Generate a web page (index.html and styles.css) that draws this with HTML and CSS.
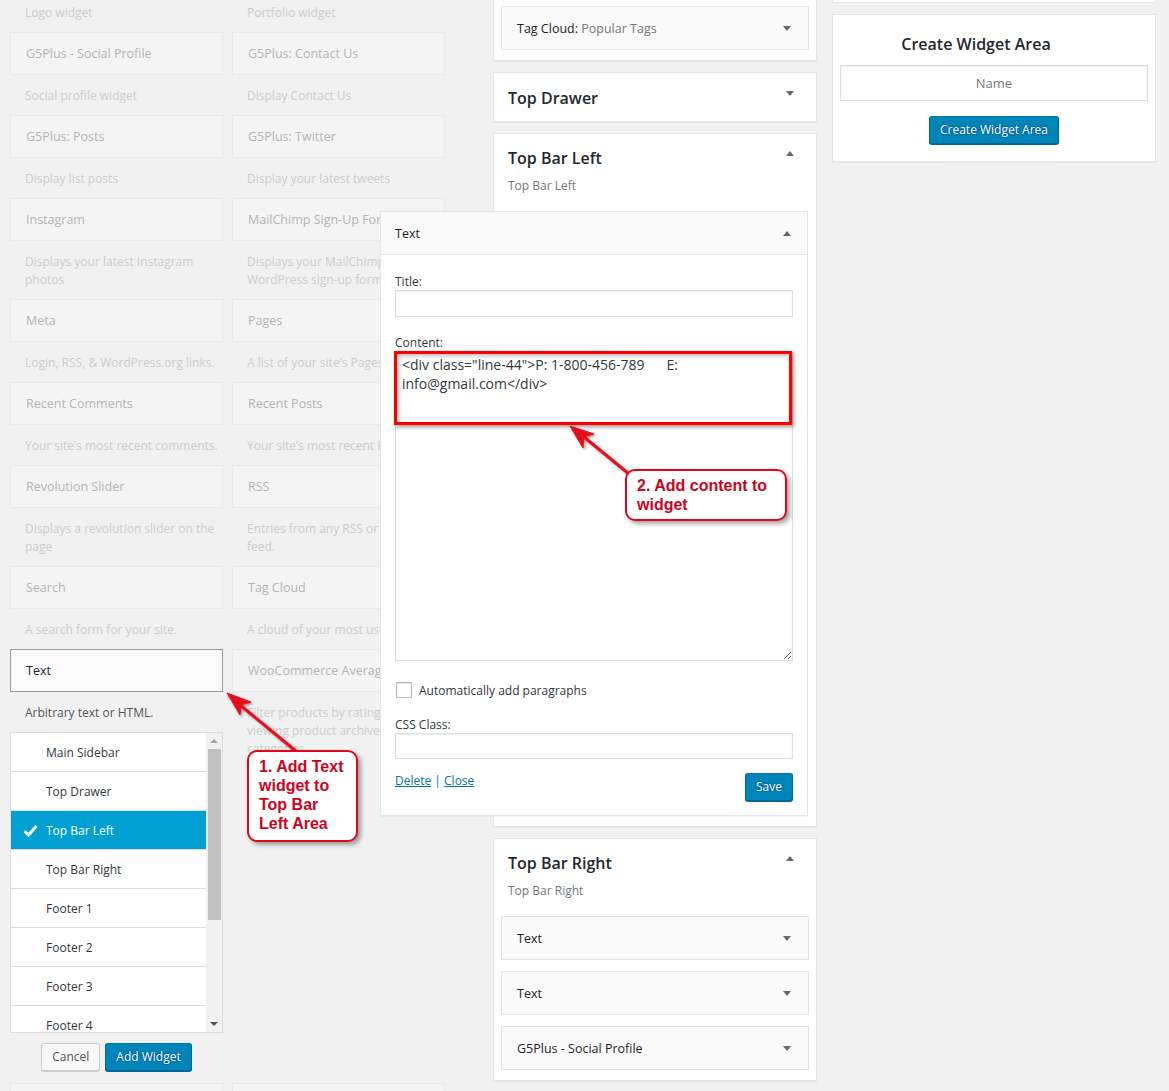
FILE: index.html
```html
<!DOCTYPE html>
<html lang="en">
<head>
	<meta charset="UTF-8">
	<title>Widgets</title>
<link rel="stylesheet" href="styles.css">
</head>
<body>
	<div class="wrap">
		<!-- available widgets, faded while the chooser is open -->
		<div class="available">
			<div class="widget"><div class="desc first">Logo widget</div></div>
			<div class="widget"><div class="desc first">Portfolio widget</div></div>

			<div class="widget"><div class="w-top">G5Plus - Social Profile</div><div class="desc">Social profile widget</div></div>
			<div class="widget"><div class="w-top">G5Plus: Contact Us</div><div class="desc">Display Contact Us</div></div>

			<div class="widget"><div class="w-top">G5Plus: Posts</div><div class="desc">Display list posts</div></div>
			<div class="widget"><div class="w-top">G5Plus: Twitter</div><div class="desc">Display your latest tweets</div></div>

			<div class="widget"><div class="w-top">Instagram</div><div class="desc">Displays your latest Instagram<br>photos</div></div>
			<div class="widget"><div class="w-top">MailChimp Sign-Up Form</div><div class="desc">Displays your MailChimp for<br>WordPress sign-up form</div></div>

			<div class="widget"><div class="w-top">Meta</div><div class="desc">Login, RSS, &amp; WordPress.org links.</div></div>
			<div class="widget"><div class="w-top">Pages</div><div class="desc">A list of your site’s Pages.</div></div>

			<div class="widget"><div class="w-top">Recent Comments</div><div class="desc">Your site’s most recent comments.</div></div>
			<div class="widget"><div class="w-top">Recent Posts</div><div class="desc">Your site’s most recent Posts.</div></div>

			<div class="widget"><div class="w-top">Revolution Slider</div><div class="desc">Displays a revolution slider on the<br>page</div></div>
			<div class="widget"><div class="w-top">RSS</div><div class="desc">Entries from any RSS or Atom<br>feed.</div></div>

			<div class="widget"><div class="w-top">Search</div><div class="desc">A search form for your site.</div></div>
			<div class="widget"><div class="w-top">Tag Cloud</div><div class="desc">A cloud of your most used tags.</div></div>

			<div class="widget in-question">
				<div class="w-top">Text</div>
				<div class="desc">Arbitrary text or HTML.</div>
				<div class="chooser">
					<ul>
						<li><span class="tick"></span>Main Sidebar</li>
						<li><span class="tick"></span>Top Drawer</li>
						<li class="selected"><span class="tick"><svg width="15" height="13" viewBox="0 0 15 13"><path d="M1.5 7 L5.5 11 L13.5 2" fill="none" stroke="#fff" stroke-width="3"/></svg></span>Top Bar Left</li>
						<li><span class="tick"></span>Top Bar Right</li>
						<li><span class="tick"></span>Footer 1</li>
						<li><span class="tick"></span>Footer 2</li>
						<li><span class="tick"></span>Footer 3</li>
						<li><span class="tick"></span>Footer 4</li>
					</ul>
					<div class="scrollbar">
						<div class="sb-btn"><span class="sb-up"></span></div>
						<div class="sb-thumb"></div>
						<div class="sb-space"></div>
						<div class="sb-btn"><span class="sb-down"></span></div>
					</div>
				</div>
				<div class="chooser-actions">
					<button class="button">Cancel</button>
					<button class="button primary">Add Widget</button>
				</div>
			</div>
			<div class="widget"><div class="w-top">WooCommerce Average Rating Filter</div><div class="desc">Filter products by rating when<br>viewing product archives and<br>categories.</div></div>

			<div class="widget"><div class="w-top"></div></div>
			<div class="widget"><div class="w-top"></div></div>
		</div>

		<!-- registered sidebars -->
		<div class="sidebars">
			<div class="sidebar partial">
				<div class="widget-box"><span class="w-title">Tag Cloud: <span class="in-title">Popular Tags</span></span><span class="arrow-down"></span></div>
			</div>

			<div class="sidebar closed">
				<h2>Top Drawer <span class="arrow-down"></span></h2>
			</div>

			<div class="sidebar">
				<h2>Top Bar Left <span class="arrow-up"></span></h2>
				<div class="sidebar-desc">Top Bar Left</div>
				<div class="widget-open">
					<div class="head"><span class="w-title">Text</span><span class="arrow-up"></span></div>
					<div class="body">
						<label>Title:</label>
						<input class="field" type="text">
						<label>Content:</label>
						<textarea class="field area">&lt;div class="line-44"&gt;P: 1-800-456-789      E: info@gmail.com&lt;/div&gt;</textarea>
						<div class="check-row"><input class="check" type="checkbox"><span>Automatically add paragraphs</span></div>
						<label>CSS Class:</label>
						<input class="field small" type="text">
						<div class="actions">
							<div class="links"><a href="#">Delete</a> | <a href="#">Close</a></div>
							<button class="button primary">Save</button>
						</div>
					</div>
				</div>
			</div>

			<div class="sidebar">
				<h2>Top Bar Right <span class="arrow-up"></span></h2>
				<div class="sidebar-desc">Top Bar Right</div>
				<div class="widget-box"><span class="w-title">Text</span><span class="arrow-down"></span></div>
				<div class="widget-box"><span class="w-title">Text</span><span class="arrow-down"></span></div>
				<div class="widget-box"><span class="w-title">G5Plus - Social Profile</span><span class="arrow-down"></span></div>
			</div>
		</div>

		<div class="side-right">
			<div class="stub"></div>
			<div class="create">
				<h3>Create Widget Area</h3>
				<input type="text" placeholder="Name">
				<div class="create-btn"><button class="button primary">Create Widget Area</button></div>
			</div>
		</div>
	</div>

	<!-- tutorial markup drawn over the screenshot -->
	<div class="highlight"></div>
	<svg class="arrows" width="1169" height="1091" viewBox="0 0 1169 1091">
		<defs>
			<filter id="sh" x="-20%" y="-20%" width="140%" height="140%">
				<feDropShadow dx="1.5" dy="1.5" stdDeviation="1" flood-color="#000" flood-opacity="0.4"/>
			</filter>
		</defs>
		<g filter="url(#sh)" fill="#e8101a" stroke="#e8101a">
			<line x1="297" y1="752" x2="240" y2="705" stroke-width="3"/>
			<polygon points="227,693 251,702 241,705 240,715" stroke-width="1"/>
			<line x1="629" y1="474" x2="584" y2="437" stroke-width="3"/>
			<polygon points="570,426 594,434 584,437 583,448" stroke-width="1"/>
		</g>
	</svg>
	<div class="note note-1">1. Add Text<br>widget to<br>Top Bar<br>Left Area</div>
	<div class="note note-2">2. Add content to<br>widget</div>
</body>
</html>
```

FILE: styles.css
```css
*{
	box-sizing: border-box;
}
html,body{
	margin: 0;
	height: 100%;
	overflow: hidden;
}
body{
	position: relative;
	background: #f1f1f1;
	font-family: "Open Sans", "Noto Sans", sans-serif;
	font-size: 12px;
	color: #32373c;
}
.wrap{
	display: flex;
	align-items: flex-start;
	padding-left: 10px;
}

/* available widgets */
.available{
	width: 435px;
	margin-right: 48px;
	display: grid;
	grid-template-columns: 213px 213px;
	column-gap: 9px;
	align-items: start;
}
.w-top{
	height: 43px;
	border: 1px solid #e9e9e9;
	background: #f4f4f4;
	padding: 0 15px;
	line-height: 41px;
	font-size: 12.5px;
	font-weight: 500;
	color: #b5b5b5;
	white-space: nowrap;
	overflow: hidden;
}
.desc{
	padding: 12px 6px 10px 15px;
	line-height: 18px;
	color: #cdcdcd;
	white-space: nowrap;
}
.desc.first{
	padding-top: 4px;
}
.in-question .w-top{
	border-color: #999;
	background: #fbfbfb;
	color: #23282d;
}
.in-question .desc{
	color: #555;
}
.chooser{
	height: 301px;
	border: 1px solid #ddd;
	background: #fff;
	display: flex;
}
.chooser ul{
	flex: 1;
	margin: 0;
	padding: 0;
	list-style: none;
	overflow: hidden;
}
.chooser li{
	height: 39px;
	flex-shrink: 0;
	border-bottom: 1px solid #ddd;
	display: flex;
	align-items: center;
	padding-left: 12px;
	color: #32373c;
}
.chooser li.selected{
	background: #00a0d2;
	color: #fff;
}
.tick{
	width: 23px;
	display: flex;
	align-items: center;
}
.scrollbar{
	width: 16px;
	background: #f1f1f1;
	display: flex;
	flex-direction: column;
	align-items: center;
}
.sb-btn{
	height: 16px;
	width: 100%;
	display: flex;
	align-items: center;
	justify-content: center;
}
.sb-up{
	border-left: 4px solid transparent;
	border-right: 4px solid transparent;
	border-bottom: 4px solid #a3a3a3;
}
.sb-down{
	border-left: 4px solid transparent;
	border-right: 4px solid transparent;
	border-top: 4px solid #505050;
}
.sb-thumb{
	width: 13px;
	height: 171px;
	background: #c1c1c1;
}
.sb-space{
	flex: 1;
}
.chooser-actions{
	display: flex;
	justify-content: center;
	gap: 5px;
	padding: 10px 0 12px;
}

/* buttons */
.button{
	height: 28px;
	padding: 0 10px;
	font-family: inherit;
	font-size: 12px;
	line-height: 26px;
	border: 1px solid #ccc;
	border-radius: 3px;
	background: #f7f7f7;
	color: #555;
	box-shadow: 0 1px 0 #ccc;
}
.button.primary{
	background: #0085ba;
	border-color: #0073aa #006799 #006799;
	color: #fff;
	box-shadow: 0 1px 0 #006799;
	text-shadow: 0 -1px 1px #006799, 1px 0 1px #006799, 0 1px 1px #006799, -1px 0 1px #006799;
}

/* sidebars */
.sidebars{
	width: 324px;
	margin-right: 15px;
}
.sidebar{
	background: #fff;
	border: 1px solid #e5e5e5;
	box-shadow: 0 1px 1px rgba(0,0,0,.04);
	margin-bottom: 11px;
	padding-bottom: 10px;
}
.sidebar.partial{
	margin-top: -1px;
	padding-top: 6px;
}
.sidebar h2{
	margin: 0;
	display: flex;
	justify-content: space-between;
	align-items: flex-start;
	padding: 14px 22px 5px 14px;
	font-size: 16px;
	font-weight: 600;
	line-height: 20px;
	color: #23282d;
}
.sidebar h2 span{
	margin-top: 3px;
}
.sidebar.closed{
	padding-bottom: 0;
}
.sidebar.closed h2{
	padding-top: 15px;
	padding-bottom: 13px;
}
.sidebar-desc{
	padding: 4px 15px 16px 14px;
	line-height: 18px;
	color: #72777c;
}
.arrow-down{
	width: 0;
	height: 0;
	border-left: 4.5px solid transparent;
	border-right: 4.5px solid transparent;
	border-top: 5px solid #646970;
}
.arrow-up{
	width: 0;
	height: 0;
	border-left: 4.5px solid transparent;
	border-right: 4.5px solid transparent;
	border-bottom: 5px solid #646970;
}
.widget-box{
	margin: 0 7px 11px;
	height: 44px;
	border: 1px solid #e5e5e5;
	background: #fafafa;
	display: flex;
	align-items: center;
	justify-content: space-between;
	padding: 0 17px 0 15px;
}
.widget-box:last-child{
	margin-bottom: 0;
}
.w-title{
	font-size: 12.5px;
	font-weight: 500;
	color: #1d2226;
}
.in-title{
	font-weight: 400;
	color: #72777c;
}

/* opened text widget */
.widget-open{
	position: relative;
	z-index: 2;
	margin: 0 8px 0 -114px;
	border: 1px solid #e5e5e5;
	background: #fff;
	box-shadow: 0 1px 1px rgba(0,0,0,.04);
}
.widget-open .head{
	height: 43px;
	border-bottom: 1px solid #e5e5e5;
	background: #fafafa;
	display: flex;
	align-items: center;
	justify-content: space-between;
	padding: 0 16px 0 14px;
}
.widget-open .body{
	padding: 18px 14px 14px;
}
.body label{
	display: block;
	line-height: 17px;
}
.field{
	display: block;
	width: 100%;
	height: 27px;
	margin: 0 0 17px;
	border: 1px solid #ddd;
	background: #fff;
	box-shadow: inset 0 1px 2px rgba(0,0,0,.07);
	font-family: inherit;
	font-size: 12px;
	color: #32373c;
}
.field.area{
	height: 310px;
	margin-bottom: 21px;
	padding: 3px 6px;
	font-size: 14px;
	line-height: 19px;
	white-space: pre-wrap;
	resize: vertical;
}
.field.small{
	height: 26px;
	margin-bottom: 14px;
}
.check-row{
	display: flex;
	align-items: center;
	height: 16px;
	margin-bottom: 18px;
}
.check{
	appearance: none;
	width: 16px;
	height: 16px;
	margin: 0 7px 0 1px;
	border: 1px solid #b4b9be;
	background: #fff;
	box-shadow: inset 0 1px 2px rgba(0,0,0,.1);
}
.actions{
	display: flex;
	justify-content: space-between;
	align-items: flex-start;
	height: 28px;
}
.links{
	margin-top: -1px;
	line-height: 18px;
	color: #0073aa;
}
.links a{
	color: #0073aa;
}

/* create widget area */
.side-right{
	width: 324px;
}
.stub{
	height: 3px;
	margin-bottom: 11px;
	background: #fff;
	border: 1px solid #e5e5e5;
	border-top: none;
}
.create{
	background: #fff;
	border: 1px solid #e5e5e5;
	box-shadow: 0 1px 1px rgba(0,0,0,.04);
	padding: 18px 7px 17px;
}
.create h3{
	margin: 0 0 10px;
	padding-right: 36px;
	text-align: center;
	font-size: 16px;
	font-weight: 600;
	line-height: 22px;
	color: #23282d;
}
.create input{
	display: block;
	width: 100%;
	height: 36px;
	margin-bottom: 15px;
	border: 1px solid #ddd;
	box-shadow: inset 0 1px 2px rgba(0,0,0,.07);
	text-align: center;
	font-family: inherit;
	font-size: 13px;
}
.create input::placeholder{
	color: #72777c;
}
.create-btn{
	text-align: center;
}

/* annotations */
.highlight{
	position: absolute;
	left: 394px;
	top: 351px;
	width: 398px;
	height: 74px;
	z-index: 5;
	border: 3px solid #f00;
	box-shadow: 2px 2px 4px rgba(0,0,0,.4), inset 2px 2px 4px rgba(0,0,0,.25);
}
.arrows{
	position: absolute;
	left: 0;
	top: 0;
	z-index: 6;
	pointer-events: none;
}
.note{
	position: absolute;
	z-index: 7;
	background: #fff;
	border: 2px solid #e3061b;
	border-radius: 10px;
	box-shadow: 3px 3px 4px rgba(0,0,0,.35);
	padding: 5px 0 0 10px;
	font-family: "Liberation Sans", Arial, sans-serif;
	font-size: 16px;
	font-weight: bold;
	line-height: 19px;
	color: #d0021b;
}
.note-1{
	left: 247px;
	top: 750px;
	width: 111px;
	height: 92px;
}
.note-2{
	left: 625px;
	top: 469px;
	width: 162px;
	height: 52px;
}
```
